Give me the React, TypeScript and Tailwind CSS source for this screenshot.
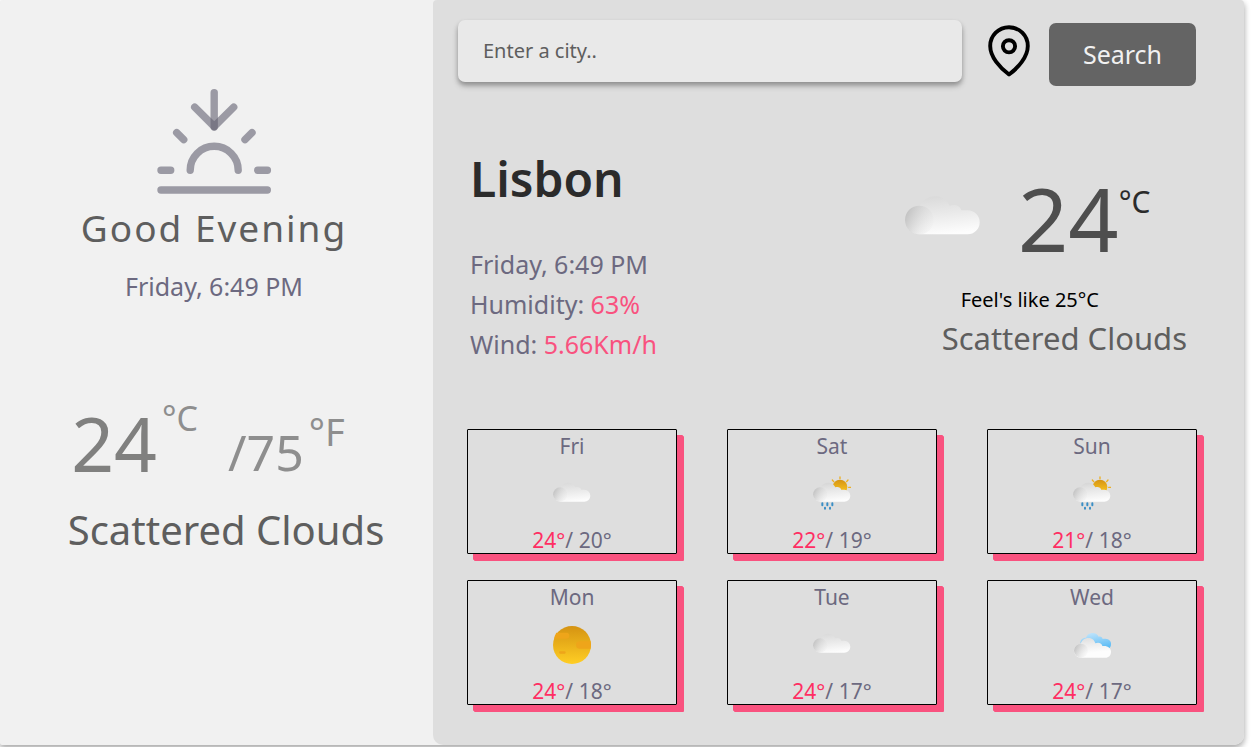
import { useId } from "react";

type Condition = "clouds" | "rain" | "clear" | "few";

interface Day {
  name: string;
  high: number;
  low: number;
  condition: Condition;
}

const days: Day[] = [
  { name: "Fri", high: 24, low: 20, condition: "clouds" },
  { name: "Sat", high: 22, low: 19, condition: "rain" },
  { name: "Sun", high: 21, low: 18, condition: "rain" },
  { name: "Mon", high: 24, low: 18, condition: "clear" },
  { name: "Tue", high: 24, low: 17, condition: "clouds" },
  { name: "Wed", high: 24, low: 17, condition: "few" },
];

function WeatherIcon({ condition, className }: { condition: Condition; className: string }) {
  const id = useId();
  const body = `${id}body`;
  const puff = `${id}puff`;
  const sun = `${id}sun`;
  const sky = `${id}sky`;
  const top = condition === "clouds" ? "#dadada" : "#d6d6d6";
  return (
    <svg viewBox="0 0 114 114" className={className} aria-hidden="true">
      <defs>
        <linearGradient id={body} gradientUnits="userSpaceOnUse" x1="52" y1="22" x2="58" y2="80">
          <stop offset="0" stopColor={top} />
          <stop offset="0.45" stopColor="#e9e9e9" />
          <stop offset="1" stopColor="#fdfdfd" />
        </linearGradient>
        <linearGradient id={puff} x1="0.05" y1="0.3" x2="0.95" y2="0.7">
          <stop offset="0" stopColor="#c4c4c4" />
          <stop offset="1" stopColor="#e8e8e8" stopOpacity="0.2" />
        </linearGradient>
        <linearGradient id={sun} x1="0.5" y1="0" x2="0.5" y2="1">
          <stop offset="0" stopColor="#d59312" />
          <stop offset="1" stopColor="#ffce24" />
        </linearGradient>
        <linearGradient id={sky} x1="0.2" y1="0" x2="0.6" y2="1">
          <stop offset="0" stopColor="#c3e5fb" />
          <stop offset="1" stopColor="#5fbdf5" />
        </linearGradient>
      </defs>

      {condition === "clear" && (
        <>
          <circle cx="57" cy="57" r="57" fill={`url(#${sun})`} />
          <path
            fill="#eea51a"
            d="M10 20H40a9 9 0 0 1 0 18H3.500Q5 28 10 20ZM80 46H113Q115 57 112.500 68H80a11 11 0 0 1 0-22ZM21.500 76h13a3 3 0 0 1 0 7h-13a3 3 0 0 1 0-7Z"
          />
        </>
      )}

      {condition === "rain" && (
        <>
          <circle cx="81" cy="36" r="22" fill={`url(#${sun})`} />
          <path
            d="M81 6v5M58 15l4 5M105 15l-4 5M107 37h6"
            stroke="#edb022"
            strokeWidth="4"
            strokeLinecap="round"
            fill="none"
          />
          <path
            d="M28 85v6M43 85v6M58 85v6M36 98v3M51 98v3"
            stroke="#3a8fc6"
            strokeWidth="6"
            strokeLinecap="round"
            fill="none"
          />
        </>
      )}

      {(condition === "rain" || condition === "clouds") && (
        <>
          <path
            fill={`url(#${body})`}
            d="M21.500 80A21.500 21.500 0 0 1 22 37C27 28 36 23 46 23C56 23 63 29 67 37C75 34 83 37 84.500 44H94A18 18 0 0 1 94 80Z"
          />
          <circle cx="21.500" cy="58.500" r="21.500" fill={`url(#${puff})`} />
        </>
      )}

      {condition === "few" && (
        <>
          <path
            fill={`url(#${sky})`}
            d="M22 52C22 40 30 35 39 35C43 24 51 21 59 21C68 21 74 26 77 32C83 30 88 33 89 39C101 37 115 42 114 54C114 60 112 64 109 67L60 62Z"
          />
          <path
            fill={`url(#${body})`}
            d="M24 95A21 21 0 0 1 23 53C28 41 37 36 47 36C58 36 64 43 67 52C77 47 87 52 88 60C104 58 114 66 114 77C114 88 107 95 97 95Z"
          />
          <circle cx="24" cy="74" r="21" fill={`url(#${puff})`} />
        </>
      )}
    </svg>
  );
}

function SunsetIcon() {
  return (
    <svg
      viewBox="0 0 116 106"
      className="h-[106px] w-[116px]"
      fill="none"
      stroke="#636071"
      strokeWidth="7.4"
      strokeLinecap="round"
      strokeLinejoin="round"
      aria-hidden="true"
    >
      <path opacity="0.6" d="M58.200 4.700V39" />
      <path opacity="0.6" d="M38.700 19.200L58.200 38.500L77.700 19.200" />
      <path opacity="0.6" d="M34.200 82.300a24 24 0 0 1 48 0" />
      <path opacity="0.6" d="M20.700 44.700l7 7M96 44.700l-7 7M5 82.300h9.700M101.700 82.300h9.700M5 102h106.300" />
    </svg>
  );
}

function PinIcon() {
  return (
    <svg
      viewBox="0 0 48 60"
      className="h-[60px] w-12"
      fill="none"
      stroke="#000"
      strokeWidth="3.900"
      strokeLinejoin="round"
      aria-hidden="true"
    >
      <path d="M24 54.500C15 48 5.200 37 5.200 26a18.800 18.800 0 0 1 37.600 0C42.800 37 33 48 24 54.500Z" />
      <circle cx="24" cy="26.300" r="6.100" />
    </svg>
  );
}

function DayCard({ day }: { day: Day }) {
  return (
    <li className="flex flex-col items-center rounded-[1px] border border-black text-[21px] text-[#6c6980] shadow-[6px_6px_0_#f9527f,7px_7px_0_#f9527f]">
      <h3 className="leading-8">{day.name}</h3>
      <WeatherIcon condition={day.condition} className="mt-[13px] size-[38px]" />
      <p className="mt-[14px] leading-[26px]">
        <span className="text-[#ff2e63]">{day.high}°</span>/ {day.low}°
      </p>
    </li>
  );
}

export default function App() {
  return (
    <div className="bg-white pr-[7px] pb-0.5 font-['Noto_Sans',sans-serif]">
      <div className="grid grid-cols-[433fr_811fr] rounded-t-[4px] rounded-br-[10px] rounded-bl-[2px] bg-[#f1f1f1] shadow-[0_3px_6px_rgba(0,0,0,0.16),0_3px_6px_rgba(0,0,0,0.23)]">
        <aside className="flex flex-col items-center pt-[88px] pr-[5px]">
          <SunsetIcon />
          <h2 className="mt-[5px] text-[37px] leading-[58px] tracking-[2px] text-[#5e5e5e]">Good Evening</h2>
          <p className="mt-[9px] text-[25px] leading-10 text-[#6c6980]">Friday, 6:49 PM</p>
          <div className="mt-[91px] flex items-start pr-3">
            <span className="mt-[6px] text-[75px] leading-[80px] text-[#80807f]">24</span>
            <span className="ml-[5px] text-[34px] leading-[42px] text-[#8e8e8e]">°C</span>
            <span className="mt-[25px] ml-[30px] text-[50px] leading-[60px] text-[#8e8e8e]">/75</span>
            <span className="mt-[14px] ml-[5px] text-[38px] leading-10 text-[#8e8e8e]">°F</span>
          </div>
          <p className="mt-[19px] pl-6 text-[40px] leading-[56px] text-[#5e5e5e]">Scattered Clouds</p>
        </aside>

        <main className="rounded-t-[4px] rounded-b-[10px] bg-[#dedede] pb-10">
          <form className="flex items-start pt-5 pr-12 pl-[25px]" onSubmit={(e) => e.preventDefault()}>
            <input
              type="text"
              aria-label="City"
              placeholder="Enter a city.."
              className="h-[62px] min-w-0 flex-1 rounded-[7px] bg-[#e9e9e9] px-[25px] pb-0.5 text-[20px] text-[#2b2b2b] shadow-[0_4px_6px_rgba(0,0,0,0.2),0_3px_4px_rgba(0,0,0,0.2)] outline-none placeholder:text-[#5e5e5e]"
            />
            <button type="button" aria-label="Use my location" className="ml-[23px]">
              <PinIcon />
            </button>
            <button
              type="submit"
              className="mt-[3px] ml-4 h-[63px] w-[147px] rounded-[7px] bg-[#646464] text-[25px] text-[#f1f1f1]"
            >
              Search
            </button>
          </form>

          <section className="mt-[61px] flex justify-between pr-[57px] pl-[37px]">
            <div>
              <h1 className="text-[48px] leading-[64px] font-semibold text-[#2b2b2b]">Lisbon</h1>
              <div className="mt-[33px] text-[25px] leading-10 text-[#6c6980]">
                <p>Friday, 6:49 PM</p>
                <p>
                  Humidity: <span className="text-[#f9527f]">63%</span>
                </p>
                <p>
                  Wind: <span className="text-[#f9527f]">5.66Km/h</span>
                </p>
              </div>
            </div>
            <div className="w-[282px] pt-[27px]">
              <div className="flex items-start">
                <WeatherIcon condition="clouds" className="mt-[7px] size-[76px]" />
                <span className="ml-[37px] text-[88px] leading-[88px] text-[#4e4e4e]">24</span>
                <span className="mt-2 text-[30px] leading-10 text-[#2b2b2b]">°C</span>
              </div>
              <p className="mt-[22px] pr-[88px] text-right text-[20px] leading-8 text-black">Feel's like 25°C</p>
              <p className="text-right text-[31px] leading-[44px] whitespace-nowrap text-[#5e5e5e]">Scattered Clouds</p>
            </div>
          </section>

          <ul className="mt-[65px] grid grid-cols-3 gap-x-[50px] gap-y-[26px] pr-[47px] pl-[34px]">
            {days.map((day) => (
              <DayCard key={day.name} day={day} />
            ))}
          </ul>
        </main>
      </div>
    </div>
  );
}
